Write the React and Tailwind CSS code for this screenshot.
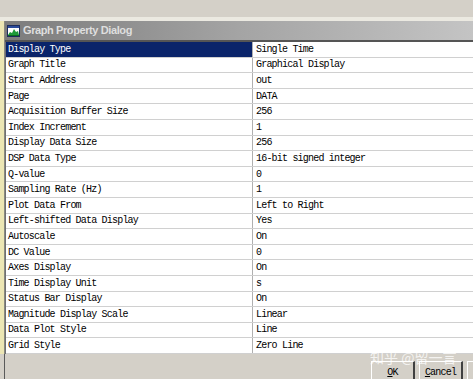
import React from 'react';

const rows = [
    ['Display Type', 'Single Time'],
    ['Graph Title', 'Graphical Display'],
    ['Start Address', 'out'],
    ['Page', 'DATA'],
    ['Acquisition Buffer Size', '256'],
    ['Index Increment', '1'],
    ['Display Data Size', '256'],
    ['DSP Data Type', '16-bit signed integer'],
    ['Q-value', '0'],
    ['Sampling Rate (Hz)', '1'],
    ['Plot Data From', 'Left to Right'],
    ['Left-shifted Data Display', 'Yes'],
    ['Autoscale', 'On'],
    ['DC Value', '0'],
    ['Axes Display', 'On'],
    ['Time Display Unit', 's'],
    ['Status Bar Display', 'On'],
    ['Magnitude Display Scale', 'Linear'],
    ['Data Plot Style', 'Line'],
    ['Grid Style', 'Zero Line'],
];

function GraphIcon() {
    return (
        <svg width="13" height="12" viewBox="0 0 13 12">
            <rect x="0.5" y="0.5" width="12" height="11" fill="#ffffff" stroke="#1c2c5c" />
            <rect x="1" y="1" width="11" height="2" fill="#2a4a9a" />
            <path d="M1 10 L3 7 L5 8 L7 4 L9 7 L11 6 L12 10 Z" fill="#1e9a3a" />
            <path d="M1 10.5 H12" stroke="#0a6a20" />
        </svg>
    );
}

function WinButton({ children, className = '' }) {
    return (
        <div className={`h-[26px] border-t border-l border-t-white border-l-white border-r-2 border-b-2 border-r-[#404040] border-b-[#404040] bg-[#d4d0c8] flex items-start pt-[3px] justify-center ${className}`}>
            {children}
        </div>
    );
}

export default function App() {
    const mono = "font-['Liberation_Mono',monospace] text-[10px] tracking-[-0.8px]";

    return (
        <div className="w-[473px] h-[379px] overflow-hidden bg-[#d4d0c8] flex flex-col relative">
            <div className="h-[17px] shrink-0 bg-[#d4d0c8]" />
            <div className="h-[4px] shrink-0 bg-[#ebe9e1]" />

            <div className="flex flex-1 min-h-0">
                {/* left window edge */}
                <div className="w-[5px] shrink-0 flex flex-col">
                    <div className="h-[333px] bg-[#ece6b4] border-r border-r-[#8a8a80]" />
                    <div className="flex-1 bg-[#d4d0c8] border-r border-r-[#5a5a5a]" />
                </div>

                <div className="flex-1 flex flex-col min-w-0">
                    {/* title bar */}
                    <div className="h-[19px] shrink-0 flex items-center gap-[3px] pl-[2px] bg-gradient-to-r from-[#7c7c7c] via-[#a4a4a4] to-[#c4c4c4]">
                        <GraphIcon />
                        <span className="font-['Liberation_Sans',sans-serif] text-[11px] font-bold tracking-[-0.4px] text-[#dedede]">
                            Graph Property Dialog
                        </span>
                    </div>
                    <div className="h-[2px] shrink-0 bg-[#555555]" />

                    {/* property grid */}
                    <div className="shrink-0 bg-white border-l border-l-[#707070]">
                        {rows.map(([name, value], i) => (
                            <div key={name} className={`flex h-[15.6px] border-b border-b-[#d0d0d0] ${mono}`}>
                                <div className={`w-[246px] shrink-0 pl-[2px] flex items-center whitespace-nowrap ${i === 0 ? 'bg-[#0a246a] text-white' : 'text-black'}`}>
                                    {name}
                                </div>
                                <div className="flex-1 pl-[3px] flex items-center whitespace-nowrap text-black border-l border-l-[#b0b0b0]">
                                    {value}
                                </div>
                            </div>
                        ))}
                    </div>

                    {/* buttons */}
                    <div className="flex-1 flex items-start justify-end gap-[4px] pt-[7px] -mr-[8px]">
                        <WinButton className="w-[44px]">
                            <span className={mono}><span className="underline">O</span>K</span>
                        </WinButton>
                        <WinButton className="w-[44px]">
                            <span className={mono}><span className="underline">C</span>ancel</span>
                        </WinButton>
                        <WinButton className="w-[14px]" />
                    </div>
                </div>
            </div>

            {/* watermark */}
            <div className="absolute left-[370px] top-[350px] font-['Noto_Sans_CJK_SC',sans-serif] text-[14px] leading-none text-white/75 whitespace-nowrap">
                知乎 @留一言
            </div>
        </div>
    );
}
